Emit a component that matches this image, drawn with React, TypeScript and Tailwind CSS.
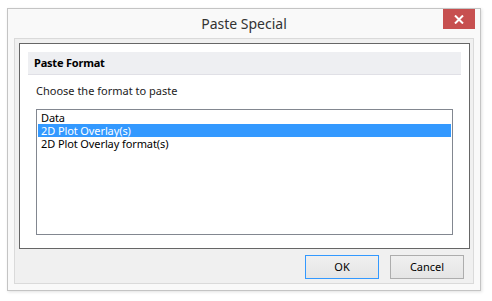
const FONT = "font-['Segoe_UI','Noto_Sans',sans-serif]"

const FORMATS = ['Data', '2D Plot Overlay(s)', '2D Plot Overlay format(s)']

export default function App() {
  const selected = 1

  return (
    <div className={`w-[492px] h-[301px] bg-white pt-[8px] pl-[7px] ${FONT}`}>
      <div className="w-[474px] h-[283px] border border-[#c4c4c4] bg-[#f9f9f9] shadow-[1px_1px_3px_rgba(0,0,0,0.12)] flex flex-col">
        {/* title bar */}
        <div className="relative h-[29px] flex items-center justify-center">
          <span className="text-[14px] text-[#333] leading-none mt-[1px]">Paste Special</span>
          <button className="absolute right-[5px] top-0 w-[32px] h-[20px] bg-[#c75050] flex items-center justify-center">
            <svg width="10" height="9" viewBox="0 0 10 9">
              <path d="M1 0.5 L9 8.5 M9 0.5 L1 8.5" stroke="white" strokeWidth="2" />
            </svg>
          </button>
        </div>

        <div className="mx-[6px] mb-[6px] flex-1 border border-[#dadada] bg-[#f0f0f0] flex flex-col pt-[4px] pl-[4px] pr-[3px]">
          <div className="h-[206px] border border-[#666] bg-white px-[8px] pt-[8px]">
            <div className="h-[23px] bg-[#eeeff2] border-b border-[#e0e0e6] flex items-center pl-[6px]">
              <span className="text-[11px] font-bold text-black tracking-[-0.2px]">Paste Format</span>
            </div>
            <div className="pl-[8px] pt-[9px] text-[11px] leading-[14px] text-[#222]">Choose the format to paste</div>
            <div className="mt-[11px] mx-[8px] h-[126px] border border-[#828790] bg-white pt-[1px] px-[1px]">
              {FORMATS.map((f, i) => (
                <div
                  key={i}
                  className={`h-[13px] pl-[3px] text-[11px] leading-[13px] tracking-[-0.1px] ${
                    i === selected ? 'bg-[#3399ff] text-white' : 'text-black'
                  }`}
                >
                  {f}
                </div>
              ))}
            </div>
          </div>

          <div className="flex justify-end gap-[11px] mt-[6px] pr-[6px]">
            <button className="w-[74px] h-[24px] border border-[#3399ff] bg-gradient-to-b from-[#f0f0f0] to-[#e5e5e5] text-[11px] text-black">
              OK
            </button>
            <button className="w-[74px] h-[24px] border border-[#adadad] bg-gradient-to-b from-[#f0f0f0] to-[#e5e5e5] text-[11px] text-black">
              Cancel
            </button>
          </div>
        </div>
      </div>
    </div>
  )
}
